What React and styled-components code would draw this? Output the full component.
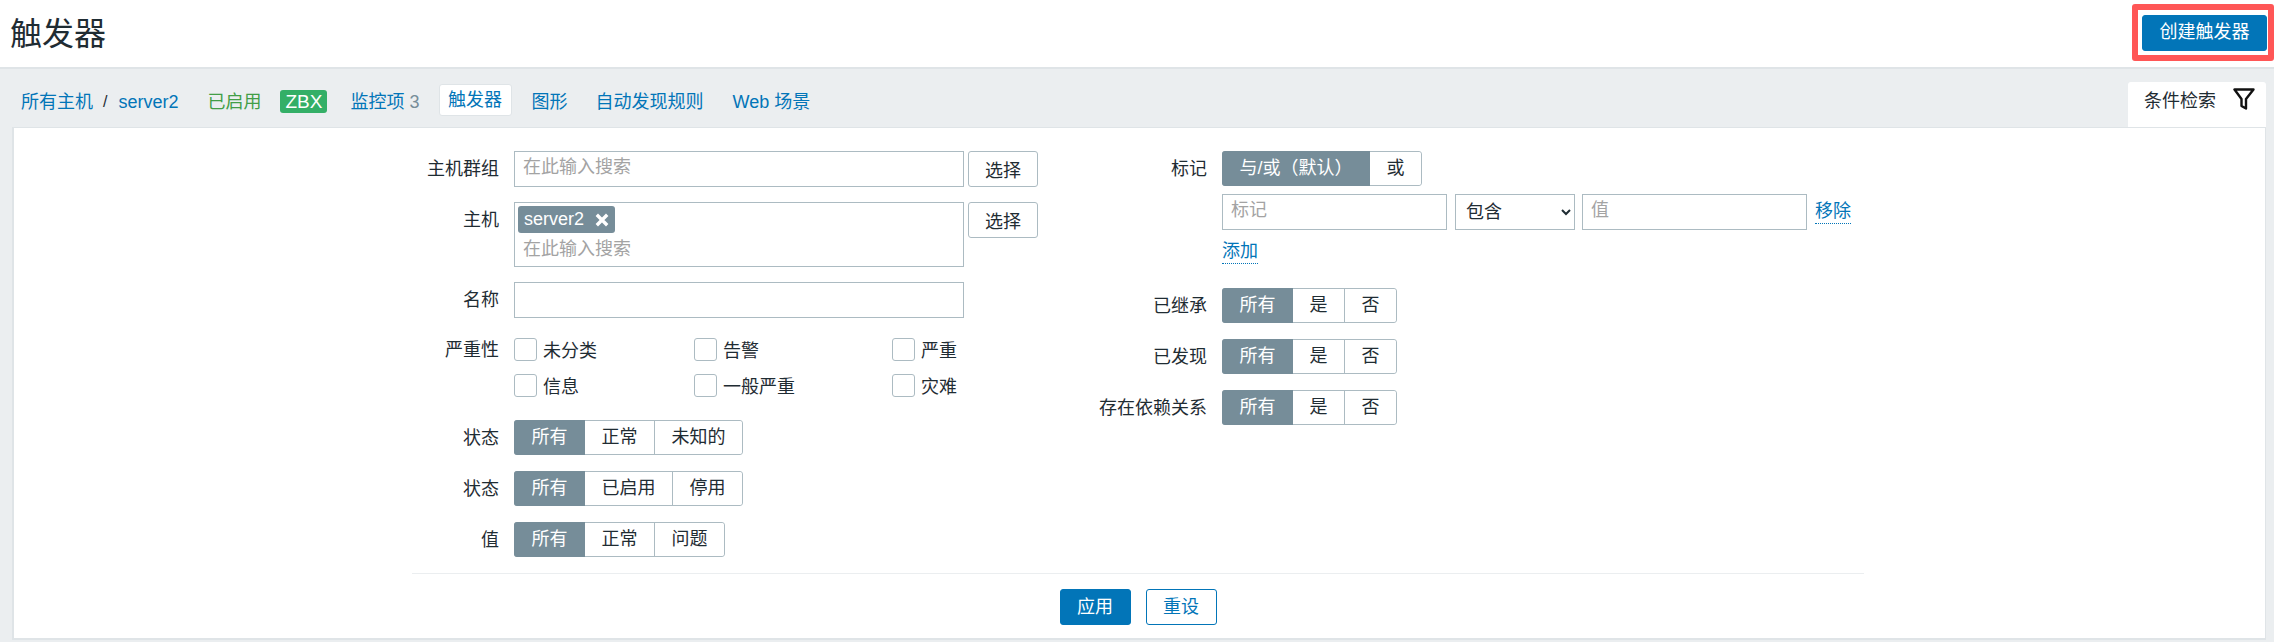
import React from "react";
import styled, { createGlobalStyle } from "styled-components";

const Global = createGlobalStyle`
  html, body {
    margin: 0;
    height: 642px;
    overflow: hidden;
    background: #ebeef0;
    color: #1f2c33;
    font: 18px/1.2 "Liberation Sans", "Noto Sans CJK SC", Arial, sans-serif;
  }
  * { box-sizing: border-box; }
`;

function Segments({ items }) {
  return (
    <SegGroup>
      {items.map((item, i) => (
        <Seg key={item} $active={i === 0}>
          {item}
        </Seg>
      ))}
    </SegGroup>
  );
}

function Check({ children }) {
  return (
    <CheckLabel>
      <CheckBox type="checkbox" />
      {children}
    </CheckLabel>
  );
}

function FilterIcon() {
  return (
    <FilterSvg width="22" height="22" viewBox="0 0 22 22" fill="none">
      <path d="M1.5 1.5h19l-7.5 9.5v9.5l-4.5-2.5V11z" stroke="#111" strokeWidth="2.4" strokeLinejoin="round" />
    </FilterSvg>
  );
}

function App() {
  return (
    <Page>
      <Global />
      <Header>
        <Title>触发器</Title>
        <Highlight>
          <PrimaryButton $wide>创建触发器</PrimaryButton>
        </Highlight>
      </Header>

      <NavBar>
        <NavLink href="#">所有主机</NavLink>
        <Slash>/</Slash>
        <NavLink href="#">server2</NavLink>
        <Enabled>已启用</Enabled>
        <Badge>ZBX</Badge>
        <NavLink href="#" $ml={23}>
          监控项 <Count>3</Count>
        </NavLink>
        <NavTab href="#">触发器</NavTab>
        <NavLink href="#" $ml={20}>图形</NavLink>
        <NavLink href="#" $ml={28}>自动发现规则</NavLink>
        <NavLink href="#" $ml={29}>Web 场景</NavLink>
        <FilterTab>
          条件检索
          <FilterIcon />
        </FilterTab>
      </NavBar>

      <Panel>
        <FilterForm>
          <Columns>
            <Fields $label={87}>
              <Label>主机群组</Label>
              <Inline>
                <TextInput placeholder="在此输入搜索" $w={450} />
                <SelectButton>选择</SelectButton>
              </Inline>

              <Label>主机</Label>
              <Inline>
                <MultiSelect>
                  <Tag>
                    server2
                    <svg width="14" height="14" viewBox="0 0 14 14">
                      <path d="M1.8 1.8l10.4 10.4M12.2 1.8L1.8 12.2" stroke="#fff" strokeWidth="3.4" />
                    </svg>
                  </Tag>
                  <BareInput placeholder="在此输入搜索" />
                </MultiSelect>
                <SelectButton>选择</SelectButton>
              </Inline>

              <Label>名称</Label>
              <TextInput $w={450} />

              <Label $check>严重性</Label>
              <CheckGrid>
                <Check>未分类</Check>
                <Check>告警</Check>
                <Check>严重</Check>
                <Check>信息</Check>
                <Check>一般严重</Check>
                <Check>灾难</Check>
              </CheckGrid>

              <Label>状态</Label>
              <Segments items={["所有", "正常", "未知的"]} />

              <Label>状态</Label>
              <Segments items={["所有", "已启用", "停用"]} />

              <Label>值</Label>
              <Segments items={["所有", "正常", "问题"]} />
            </Fields>

            <Fields $label={135}>
              <Label>标记</Label>
              <TagBlock>
                <Segments items={["与/或（默认）", "或"]} />
                <TagRow>
                  <TextInput placeholder="标记" $w={225} />
                  <TagSelect defaultValue="包含">
                    <option>包含</option>
                    <option>等于</option>
                  </TagSelect>
                  <TextInput placeholder="值" $w={225} />
                  <ActionLink href="#">移除</ActionLink>
                </TagRow>
                <AddLink href="#">添加</AddLink>
              </TagBlock>

              <Label>已继承</Label>
              <Segments items={["所有", "是", "否"]} />

              <Label>已发现</Label>
              <Segments items={["所有", "是", "否"]} />

              <Label>存在依赖关系</Label>
              <Segments items={["所有", "是", "否"]} />
            </Fields>
          </Columns>

          <Footer>
            <PrimaryButton>应用</PrimaryButton>
            <OutlineButton>重设</OutlineButton>
          </Footer>
        </FilterForm>
      </Panel>
    </Page>
  );
}

export default App;

const Page = styled.div`
  width: 2274px;
  height: 642px;
  overflow: hidden;
`;

const Header = styled.header`
  height: 69px;
  padding: 4px 0 6px 10px;
  display: flex;
  align-items: center;
  justify-content: space-between;
  background: #fff;
  border-bottom: 2px solid #dfe4e7;
`;

const Title = styled.h1`
  margin: 2px 0 0;
  font-size: 32px;
  font-weight: 400;
  line-height: 1;
  color: #1f2c33;
`;

const Highlight = styled.div`
  width: 142px;
  height: 57px;
  padding: 5px 1px 3px 4px;
  border: 6px solid #ff5656;
  border-radius: 3px;
  background: #fff;
`;

const PrimaryButton = styled.button`
  width: ${(props) => (props.$wide ? "125px" : "71px")};
  height: 36px;
  padding: ${(props) => (props.$wide ? "0" : "2px 0 0")};
  border: 1px solid #0275b8;
  border-radius: 3px;
  background: #0275b8;
  color: #fff;
  font: inherit;
`;

const OutlineButton = styled.button`
  width: 71px;
  height: 36px;
  padding: 2px 0 0;
  border: 1px solid #0275b8;
  border-radius: 3px;
  background: #fff;
  color: #0275b8;
  font: inherit;
`;

const NavBar = styled.nav`
  height: 58px;
  padding: 14px 8px 0 21px;
  display: flex;
  align-items: flex-start;
`;

const NavLink = styled.a`
  margin-left: ${(props) => props.$ml || 0}px;
  padding-top: 9px;
  color: #0275b8;
  text-decoration: none;
  white-space: nowrap;
`;

const Count = styled.span`
  color: #768d99;
`;

const Slash = styled.span`
  margin: 9px 11px 0 10px;
  font-size: 16px;
`;

const Enabled = styled.span`
  margin-left: 29px;
  padding-top: 9px;
  color: #429e47;
`;

const Badge = styled.span`
  width: 47px;
  height: 23px;
  margin: 7px 0 0 19px;
  border-radius: 3px;
  background: #34af67;
  color: #fff;
  font-size: 19px;
  line-height: 23px;
  text-align: center;
`;

const NavTab = styled.a`
  width: 73px;
  height: 32px;
  margin: 1px 0 0 19px;
  border: 1px solid #dfe4e7;
  border-radius: 3px;
  background: #fff;
  color: #0275b8;
  line-height: 30px;
  text-align: center;
  text-decoration: none;
`;

const FilterTab = styled.div`
  width: 138px;
  height: 45px;
  margin-top: -1px;
  margin-left: auto;
  padding: 0 0 6px 16px;
  display: flex;
  align-items: center;
  gap: 17px;
  border-radius: 3px 3px 0 0;
  background: #fff;
  color: #1f2c33;
`;

const FilterSvg = styled.svg`
  margin-top: -6px;
`;

const Panel = styled.main`
  height: 513px;
  margin: 0 8px 0 12px;
  padding: 23px 0 0 398px;
  background: #fff;
  border: 1px solid #dfe4e7;
  border-width: 1px 1px 2px 2px;
`;

const FilterForm = styled.form`
  width: 1452px;
`;

const Columns = styled.div`
  display: grid;
  grid-template-columns: 660px 1fr;
`;

const Fields = styled.div`
  display: grid;
  grid-template-columns: ${(props) => props.$label}px 1fr;
  column-gap: 15px;
  row-gap: 15px;
  align-content: start;
`;

const Label = styled.label`
  line-height: ${(props) => (props.$check ? "34px" : "36px")};
  text-align: right;
  color: #1f2c33;
  white-space: nowrap;
`;

const Inline = styled.div`
  display: flex;
  gap: 4px;
  align-items: flex-start;
`;

const TextInput = styled.input`
  width: ${(props) => props.$w}px;
  height: 36px;
  padding: 0 8px 3px;
  border: 1px solid #acbbc2;
  border-radius: 0;
  background: #fff;
  color: #1f2c33;
  font: inherit;
  outline: none;

  &::placeholder {
    color: #a3a3a3;
  }
`;

const SelectButton = styled.button`
  width: 70px;
  height: 36px;
  padding: 5px 0 0;
  border: 1px solid #acbbc2;
  border-radius: 3px;
  background: #fff;
  color: #1f2c33;
  font: inherit;
`;

const MultiSelect = styled.div`
  width: 450px;
  height: 65px;
  padding: 3px;
  border: 1px solid #acbbc2;
  background: #fff;
`;

const Tag = styled.span`
  width: 97px;
  height: 27px;
  padding: 0 6px;
  display: flex;
  align-items: center;
  justify-content: space-between;
  border-radius: 3px;
  background: #768d99;
  color: #fff;
`;

const BareInput = styled.input`
  width: 100%;
  height: 32px;
  padding: 0 5px;
  border: 0;
  background: transparent;
  font: inherit;
  outline: none;

  &::placeholder {
    color: #a3a3a3;
  }
`;

const CheckGrid = styled.div`
  padding: 5px 0 8px;
  display: grid;
  grid-template-columns: 180px 198px 1fr;
  row-gap: 13px;
`;

const CheckLabel = styled.label`
  display: flex;
  align-items: flex-start;
  gap: 6px;
  height: 23px;
  line-height: 27px;
`;

const CheckBox = styled.input`
  appearance: none;
  width: 23px;
  height: 23px;
  margin: 0;
  border: 1px solid #acbbc2;
  border-radius: 3px;
  background: #fff;
`;

const SegGroup = styled.div`
  display: inline-flex;
  justify-self: start;
  height: 35px;
  margin-bottom: 1px;
  border: 1px solid #acbbc2;
  border-radius: 3px;
  background: #fff;
`;

const Seg = styled.span`
  margin: ${(props) => (props.$active ? "-1px 0 -1px -1px" : "0")};
  padding: ${(props) => (props.$active ? "0 17.5px" : "0 16.5px")};
  line-height: ${(props) => (props.$active ? "34px" : "32px")};
  background: ${(props) => (props.$active ? "#768d99" : "#fff")};
  color: ${(props) => (props.$active ? "#fff" : "#1f2c33")};
  border-radius: ${(props) => (props.$active ? "3px 0 0 3px" : "0")};
  white-space: nowrap;

  & + & {
    border-left: 1px solid #acbbc2;
  }

  &:first-child + & {
    border-left: 0;
  }

  &:last-child {
    border-radius: 0 3px 3px 0;
  }
`;

const TagBlock = styled.div`
  display: flex;
  flex-direction: column;
  align-items: flex-start;
  min-height: 122px;
`;

const TagRow = styled.div`
  margin-top: 7px;
  display: flex;
  align-items: flex-start;
  gap: 8px;
`;

const TagSelect = styled.select`
  width: 120px;
  height: 36px;
  margin-right: -1px;
  padding: 0 4px 0 6px;
  border: 1px solid #acbbc2;
  border-radius: 0;
  background-color: #fff;
  color: #1f2c33;
  font: inherit;
  outline: none;
`;

const ActionLink = styled.a`
  margin-top: 6px;
  height: 24px;
  color: #0275b8;
  line-height: 22px;
  text-decoration: none;
  border-bottom: 1px dotted #0275b8;
`;

const AddLink = styled(ActionLink)`
  margin-top: 10px;
`;

const Footer = styled.div`
  height: 68px;
  margin-top: 15px;
  padding-top: 15px;
  display: flex;
  justify-content: center;
  align-items: flex-start;
  gap: 15px;
  border-top: 1px solid #ebeef0;
`;
